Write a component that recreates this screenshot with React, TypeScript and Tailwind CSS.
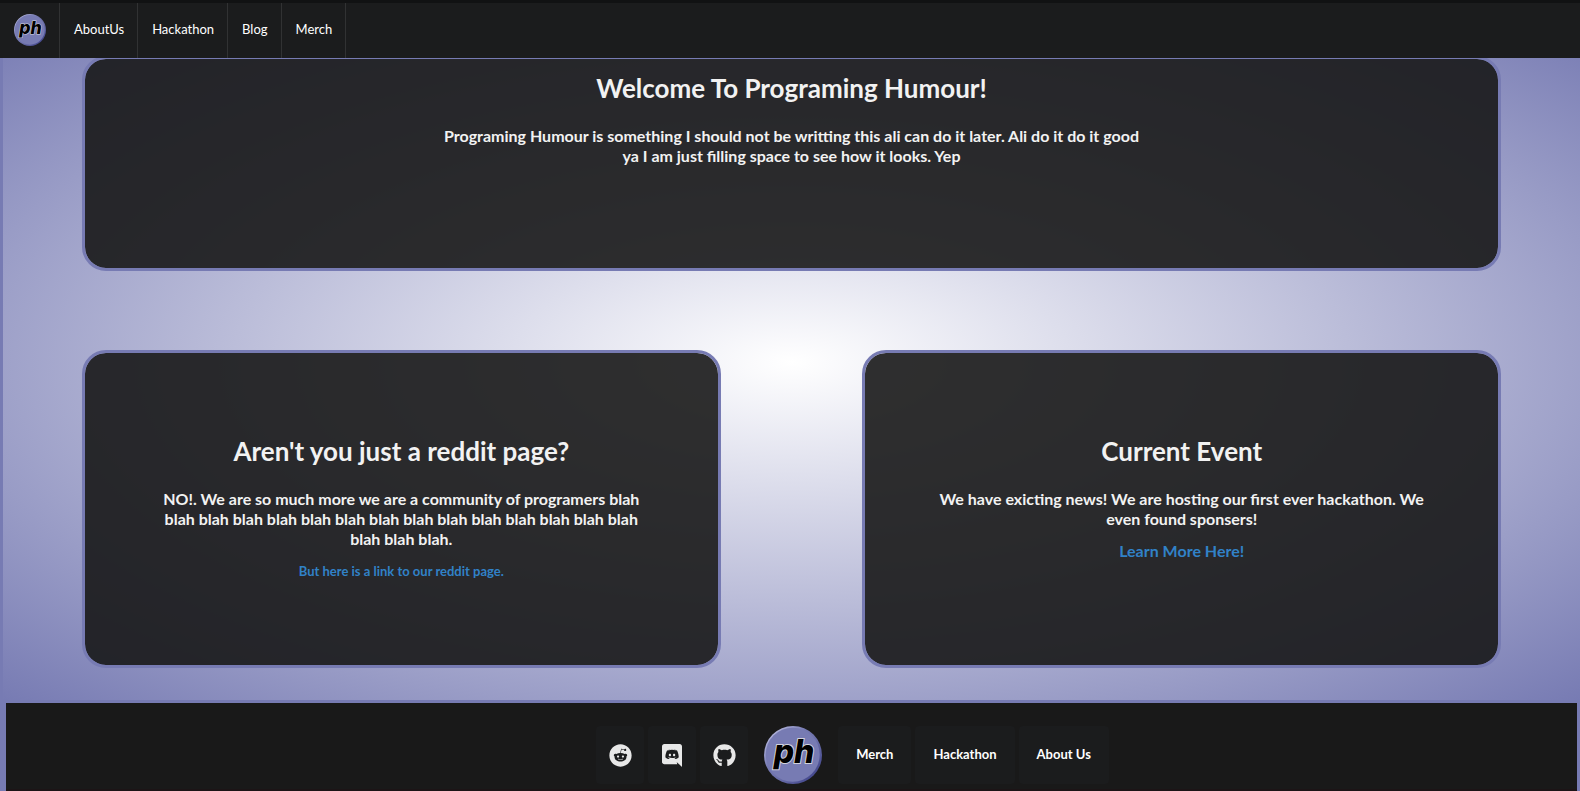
import type { ReactNode } from "react";
import { FaReddit, FaGithub } from "react-icons/fa";

const navLinks = ["AboutUs", "Hackathon", "Blog", "Merch"];
const footerLinks = ["Merch", "Hackathon", "About Us"];

function Logo({ id, className }: { id: string; className: string }) {
  return (
    <svg viewBox="0 0 58 58" className={className} role="img" aria-label="Programing Humour">
      <defs>
        <linearGradient id={id} x1="0.1" y1="0.1" x2="0.9" y2="0.9">
          <stop offset="0" stopColor="#b9bbe0" />
          <stop offset="0.35" stopColor="#777bb3" />
          <stop offset="0.6" stopColor="#6b6fa9" />
          <stop offset="1" stopColor="#40448a" />
        </linearGradient>
      </defs>
      <circle cx="29" cy="29" r="29" fill={`url(#${id})`} />
      <circle cx="28.7" cy="28.7" r="27" fill="#777bb3" />
      <text
        x="30"
        y="37"
        textAnchor="middle"
        fontFamily="Inter, 'DejaVu Sans', sans-serif"
        fontSize="32"
        fontWeight="800"
        fontStyle="italic"
        fill="#000"
        stroke="#d2d2dc"
        strokeWidth="2"
        paintOrder="stroke"
      >
        ph
      </text>
    </svg>
  );
}

function DiscordIcon() {
  return (
    <svg viewBox="0 0 448 512" className="h-[23px] w-5" fill="currentColor" aria-hidden="true">
      <path d="M297.216 243.2c0 15.616-11.52 28.416-26.112 28.416-14.336 0-26.112-12.8-26.112-28.416s11.52-28.416 26.112-28.416c14.592 0 26.112 12.8 26.112 28.416zm-119.552-28.416c-14.592 0-26.112 12.8-26.112 28.416s11.776 28.416 26.112 28.416c14.592 0 26.112-12.8 26.112-28.416.256-15.616-11.52-28.416-26.112-28.416zM448 52.736V512c-64.494-56.994-43.868-38.128-118.784-107.776l13.568 47.36H52.48C23.552 451.584 0 428.032 0 398.848V52.736C0 23.552 23.552 0 52.48 0h343.04C424.448 0 448 23.552 448 52.736zm-72.96 242.688c0-82.432-36.864-149.248-36.864-149.248-36.864-27.648-71.936-26.88-71.936-26.88l-3.584 4.096c43.52 13.312 63.744 32.512 63.744 32.512-60.811-33.329-132.244-33.335-191.232-7.424-9.472 4.352-15.104 7.424-15.104 7.424s21.248-20.224 67.328-33.536l-2.56-3.072s-35.072-.768-71.936 26.88c0 0-36.864 66.816-36.864 149.248 0 0 21.504 37.12 78.08 38.912 0 0 9.472-11.52 17.152-21.248-32.512-9.728-44.8-30.208-44.8-30.208 3.766 2.636 9.976 6.053 10.496 6.4 43.21 24.198 104.588 32.126 159.744 8.96 8.96-3.328 18.944-8.192 29.44-15.104 0 0-12.8 20.992-46.336 30.464 7.68 9.728 16.896 20.736 16.896 20.736 56.576-1.792 78.336-38.912 78.336-38.912z" />
    </svg>
  );
}

const socials: { label: string; icon: ReactNode }[] = [
  { label: "Reddit", icon: <FaReddit className="size-[23px]" /> },
  { label: "Discord", icon: <DiscordIcon /> },
  { label: "GitHub", icon: <FaGithub className="size-[23px]" /> },
];

function Card({ title, className, children }: { title: string; className: string; children: ReactNode }) {
  return (
    <section
      className={`flex flex-col items-center rounded-3xl border-3 border-[#777bb3] bg-[#181818]/90 bg-clip-padding text-center font-bold text-[#f2f2f2] ${className}`}
    >
      <h1 className="mb-[22px] text-[26px] leading-8">{title}</h1>
      {children}
    </section>
  );
}

export default function App() {
  return (
    <div className="min-h-screen bg-[#777bb3] font-['Lato',sans-serif]">
      <header className="sticky top-0 z-10 border-t-3 border-[#111213] bg-[#1b1c1d]">
        <nav className="flex h-[55px] text-[13px] text-white">
          <a href="#home" className="flex items-center border-r border-[#313233] pr-[13px] pb-[2px] pl-[14px]">
            <Logo id="rim-nav" className="size-8" />
          </a>
          {navLinks.map((label) => (
            <a
              key={label}
              href={`#${label}`}
              className="flex items-center border-r border-[#313233] pr-[13px] pb-[2px] pl-[14px]"
            >
              {label}
            </a>
          ))}
        </nav>
      </header>

      <main className="-mt-[34px] border-b-3 border-l-3 border-[#777bb3] bg-[radial-gradient(#ffffff,#777bb3)] px-[5%] pt-8 pb-8">
        <Card title="Welcome To Programing Humour!" className="min-h-[215px] pt-[13px]">
          <p className="w-1/2 text-base leading-5">
            Programing Humour is something I should not be writting this ali can do it later. Ali do it do it good ya I
            am just filling space to see how it looks. Yep
          </p>
        </Card>
        <div className="mt-[79px] grid grid-cols-2 gap-x-[10%]">
          <Card title="Aren't you just a reddit page?" className="min-h-[318px] pt-[82px]">
            <p className="w-4/5 text-base leading-5">
              NO!. We are so much more we are a community of programers blah blah blah blah blah blah blah blah blah
              blah blah blah blah blah blah blah blah blah.
            </p>
            <a href="#reddit" className="mt-3 text-[13px] leading-5 text-[#3182c8]">
              But here is a link to our reddit page.
            </a>
          </Card>
          <Card title="Current Event" className="min-h-[318px] pt-[82px]">
            <p className="w-4/5 text-base leading-5">
              We have exicting news! We are hosting our first ever hackathon. We even found sponsers!
            </p>
            <a href="#hackathon" className="mt-3 text-base leading-5 text-[#3182c8]">
              Learn More Here!
            </a>
          </Card>
        </div>
      </main>

      <footer className="mr-[3px] ml-[6px] flex justify-center border-b-2 border-[#1c1416] bg-[#191919] pt-[23px] pb-[5px]">
        <nav className="ml-[122px] flex gap-1 text-[13px] font-bold text-white">
          {socials.map(({ label, icon }) => (
            <a
              key={label}
              href={`#${label}`}
              aria-label={label}
              className="flex h-[58px] w-12 items-center justify-center rounded bg-[#1b1c1d] text-[#e8e8e8]"
            >
              {icon}
            </a>
          ))}
          <a href="#home" className="mr-3 ml-3">
            <Logo id="rim-footer" className="size-[58px]" />
          </a>
          {footerLinks.map((label) => (
            <a key={label} href={`#${label}`} className="flex h-[58px] items-center rounded bg-[#1b1c1d] px-[18px]">
              {label}
            </a>
          ))}
        </nav>
      </footer>
    </div>
  );
}
